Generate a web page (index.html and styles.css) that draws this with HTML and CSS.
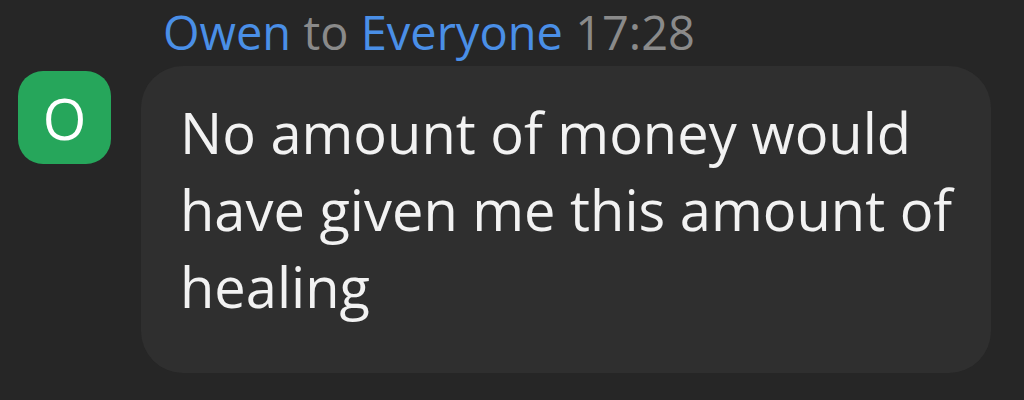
FILE: index.html
```html
<!DOCTYPE html>
<html lang="en">
<head>
  <meta charset="UTF-8" />
  <title>chat</title>
  <link rel="stylesheet" href="styles.css">
</head>
<body>
  <div class="message">
    <div class="avatar">O</div>
    <div class="content">
      <div class="meta">
        <span class="name">Owen</span>
        <span class="to">to</span>
        <span class="name">Everyone</span>
        <span class="time">17:28</span>
      </div>
      <div class="bubble">No amount of money would have given me this amount of healing</div>
    </div>
  </div>
</body>
</html>
```

FILE: styles.css
```css
body {
  margin: 0;
  background-color: #262626;
  font-family: "Open Sans", sans-serif;
  overflow: hidden;
}

.message {
  display: flex;
  gap: 30px;
  padding: 0 33px 0 18px;
}

.avatar {
  flex: none;
  width: 93px;
  height: 93px;
  margin-top: 71px;
  border-radius: 25px;
  background-color: #26a65b;
  color: #fff;
  font-size: 56px;
  display: flex;
  align-items: center;
  justify-content: center;
}

.content {
  flex: 1;
}

.meta {
  height: 66px;
  padding-left: 22px;
  font-size: 47px;
  line-height: 64px;
  color: #8a8a8a;
  white-space: nowrap;
}

.name {
  color: #4a8fe7;
}

.bubble {
  background-color: #2f2f2f;
  border-radius: 42px;
  padding: 28px 30px 48px 39px;
  color: #f2f2f2;
  font-size: 56px;
  line-height: 77px;
}
```
